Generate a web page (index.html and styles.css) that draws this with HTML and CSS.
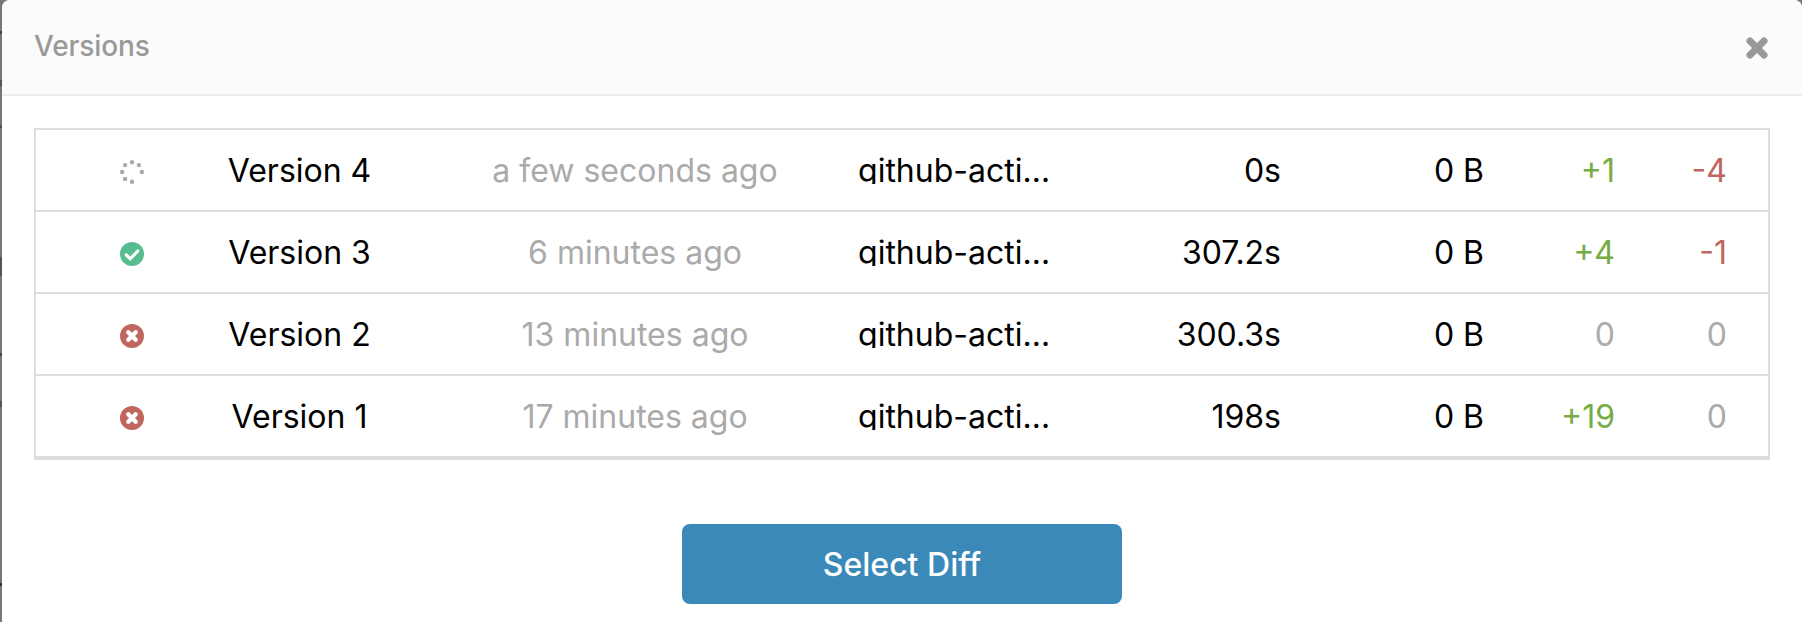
FILE: index.html
```html
<!DOCTYPE html>
<html lang="en">
<head>
<meta charset="utf-8">
<title>Versions</title>
<link rel="stylesheet" href="styles.css">
</head>
<body>
<svg class="defs" width="0" height="0" aria-hidden="true">
  <symbol id="fail" viewBox="0 0 24 24">
    <circle cx="12" cy="12" r="12" fill="#c1665f"/>
    <path d="M8.3 8.3l7.4 7.4M15.7 8.3l-7.4 7.4" stroke="#fff" stroke-width="4.4" stroke-linecap="round"/>
  </symbol>
</svg>
<main class="modal">
  <header class="modal-header">
    <h1 class="title">Versions</h1>
    <svg class="close" viewBox="0 0 22 22"><path d="M4 4l14 14M18 4L4 18" stroke="#999" stroke-width="7" stroke-linecap="round" fill="none"/></svg>
  </header>
  <section class="modal-body">
    <div class="versions">
      <div class="row">
        <svg class="status" viewBox="0 0 24 24" fill="#a8a8a8"><circle cx="12" cy="2.2" r="2.2"/><circle cx="18.9" cy="5.1" r="2.2"/><circle cx="21.8" cy="12" r="2.2"/><circle cx="12" cy="21.8" r="2.2"/><circle cx="5.1" cy="18.9" r="2.2"/><circle cx="2.2" cy="12" r="2.2"/><circle cx="5.1" cy="5.1" r="2.2"/></svg>
        <span class="name">Version 4</span><span class="age">a few seconds ago</span><span class="user">github-actions[bot]</span>
        <span class="num">0s</span><span class="num">0 B</span><span class="num added">+1</span><span class="num removed">-4</span>
      </div>
      <div class="row">
        <svg class="status" viewBox="0 0 24 24"><circle cx="12" cy="12" r="12" fill="#55bd90"/><path d="M6.2 12.8l4 4 7.6-7.8" stroke="#fff" stroke-width="3.2" fill="none" stroke-linecap="round"/></svg>
        <span class="name">Version 3</span><span class="age">6 minutes ago</span><span class="user">github-actions[bot]</span>
        <span class="num">307.2s</span><span class="num">0 B</span><span class="num added">+4</span><span class="num removed">-1</span>
      </div>
      <div class="row">
        <svg class="status"><use href="#fail"/></svg>
        <span class="name">Version 2</span><span class="age">13 minutes ago</span><span class="user">github-actions[bot]</span>
        <span class="num">300.3s</span><span class="num">0 B</span><span class="num none">0</span><span class="num none">0</span>
      </div>
      <div class="row">
        <svg class="status"><use href="#fail"/></svg>
        <span class="name">Version 1</span><span class="age">17 minutes ago</span><span class="user">github-actions[bot]</span>
        <span class="num">198s</span><span class="num">0 B</span><span class="num added">+19</span><span class="num none">0</span>
      </div>
    </div>
    <button class="select">Select Diff</button>
  </section>
</main>
</body>
</html>
```
FILE: styles.css
```css
* { box-sizing: border-box; }

body {
  margin: 0;
  height: 622px;
  overflow: hidden;
  padding-left: 2px;
  font-family: Inter, "Liberation Sans", sans-serif;
  background: linear-gradient(#777 0 31px, #444 31px 34px, #777 34px 80px, #555 80px 86px, #777 86px 125px, #555 125px 128px, #777 128px 257px, #555 257px 276px, #777 276px 353px, #444 353px 356px, #777 356px 401px, #555 401px 407px, #777 407px 583px, #333 583px 586px, #777 586px);
}

.defs { position: absolute; }

.modal {
  height: 640px;
  background: #fff;
  border-radius: 8px 8px 0 0;
  overflow: hidden;
}

.modal-header {
  display: flex;
  justify-content: space-between;
  align-items: center;
  height: 96px;
  padding: 0 34px 0 32px;
  background: #fbfbfb;
  border-bottom: 2px solid #ececec;
}

.title {
  margin: 0 0 2px;
  font-size: 28px;
  font-weight: 500;
  line-height: 34px;
  letter-spacing: -0.1px;
  color: #999;
}

.close { width: 22px; height: 22px; margin-top: 2px; }

.modal-body {
  display: flex;
  flex-direction: column;
  align-items: center;
  padding: 32px 32px 0;
}

.versions {
  width: 100%;
  border: 2px solid #dcdcdc;
}

.row {
  display: grid;
  grid-template-columns: 110px 225px 446px 196px 227px 203px 131px 112px;
  align-items: center;
  height: 82px;
  padding-left: 41px;
  border-bottom: 2px solid #dcdcdc;
  font-size: 32px;
  line-height: 30px;
  white-space: nowrap;
  color: #000;
}

.row span { height: 28px; }

.status {
  width: 24px;
  height: 24px;
  margin-top: 4px;
  justify-self: center;
}

.name, .age { text-align: center; }
.age { color: #aaa; }

.user {
  overflow: hidden;
  text-overflow: ellipsis;
}

.num { text-align: right; }
.added { color: #77ab43; }
.removed { color: #c1665f; }
.none { color: #aaa; }

.select {
  width: 440px;
  height: 80px;
  margin-top: 64px;
  padding: 2px 0 0;
  border: 0;
  border-radius: 8px;
  background: #3b89b9;
  color: #fff;
  font: 550 32px/78px Inter, "Liberation Sans", sans-serif;
}
```
